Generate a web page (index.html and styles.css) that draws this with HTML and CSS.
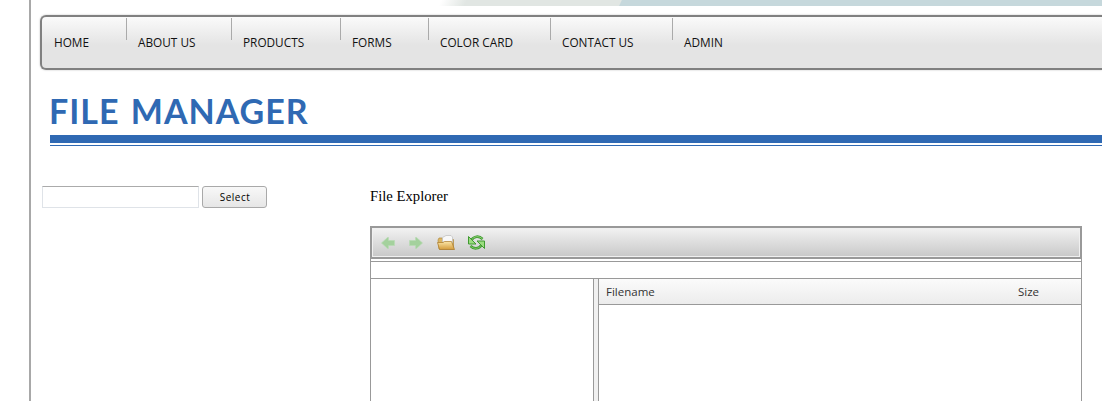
FILE: index.html
```html
<!DOCTYPE html>
<html lang="en">

<head>
  <meta charset="UTF-8" />
  <title>File Manager</title>
  <link rel="stylesheet" href="styles.css">
</head>

<body>
  <div class="page">
    <div class="banner"></div>

    <!-- Main menu -->
    <ul class="nav">
      <li class="home"><a>HOME</a></li>
      <li class="about"><a>ABOUT US</a></li>
      <li class="products"><a>PRODUCTS</a></li>
      <li class="forms"><a>FORMS</a></li>
      <li class="color"><a>COLOR CARD</a></li>
      <li class="contact"><a>CONTACT US</a></li>
      <li class="admin"><a>ADMIN</a></li>
    </ul>

    <div class="title">
      <h1>FILE MANAGER</h1>
    </div>

    <div class="content">
      <div class="picker">
        <input type="text" class="picker-input" />
        <button class="picker-btn">Select</button>
      </div>

      <div class="explorer">
        <p class="explorer-label">File Explorer</p>

        <div class="window">
          <div class="toolbar">
            <svg class="tool tool-back" width="14" height="12" viewBox="0 0 14 12">
              <path d="M0.5 6 L6.5 0.5 H7.5 V3.5 H13.5 V8.5 H7.5 V11.5 H6.5 Z" fill="#a4d19d" stroke="#b9dbb4" stroke-width="0.7" />
            </svg>
            <svg class="tool tool-forward" width="14" height="12" viewBox="0 0 14 12">
              <path d="M13.5 6 L7.5 0.5 H6.5 V3.5 H0.5 V8.5 H6.5 V11.5 H7.5 Z" fill="#a4d19d" stroke="#b9dbb4" stroke-width="0.7" />
            </svg>
            <svg class="tool tool-open" width="18" height="15" viewBox="0 0 18 15">
              <defs>
                <linearGradient id="folder" x1="0" y1="0" x2="0" y2="1">
                  <stop offset="0" stop-color="#fbe6a8" />
                  <stop offset="1" stop-color="#d49c3c" />
                </linearGradient>
              </defs>
              <path d="M1 5 L2 3 H5 L6 4.5 H16.5 V14 H2 Z" fill="#dcb663" stroke="#b28a3c" stroke-width="0.7" />
              <path d="M5.5 7 V2.5 L9 0.5 H14 L15.5 2 V8 Z" fill="#f8f8f8" stroke="#bdbdbd" stroke-width="0.7" />
              <path d="M0.5 7.5 H6 L7.5 6.5 H14.5 L17.5 14.5 H2.5 Z" fill="url(#folder)" stroke="#a9782a" stroke-width="0.7" />
            </svg>
            <svg class="tool tool-refresh" width="17" height="17" viewBox="0 0 17 17">
              <path d="M3.5 6 C6 2 11 1.5 14.5 5" fill="none" stroke="#3f9a30" stroke-width="2.6" />
              <path d="M3.5 6 C6 2 11 1.5 14.5 5" fill="none" stroke="#8fd276" stroke-width="1" />
              <path d="M0.5 2.5 V10 H8 Z" fill="#9bdc80" stroke="#3f9a30" stroke-width="1" />
              <path d="M13.5 11 C11 15 6 15.5 2.5 12" fill="none" stroke="#3f9a30" stroke-width="2.6" />
              <path d="M13.5 11 C11 15 6 15.5 2.5 12" fill="none" stroke="#7cc862" stroke-width="1" />
              <path d="M16.5 14.5 V7 H9 Z" fill="#9bdc80" stroke="#3f9a30" stroke-width="1" />
            </svg>
          </div>

          <div class="pathbar"></div>

          <div class="panes">
            <div class="tree"></div>
            <div class="splitter"></div>
            <div class="files">
              <div class="files-head">
                <span class="col-name">Filename</span>
                <span class="col-size">Size</span>
              </div>
            </div>
          </div>
        </div>
      </div>
    </div>
  </div>
</body>

</html>
```

FILE: styles.css
```css
html,
body {
  margin: 0;
  padding: 0;
  height: 401px;
  overflow: hidden;
  background: #fff;
}

body {
  font-family: "Open Sans", sans-serif;
  color: #222;
}

.page {
  height: 401px;
  margin-left: 29px;
  border-left: 2px solid #a8a8a8;
  box-sizing: border-box;
  overflow: hidden;
}

.banner {
  height: 6px;
  margin-bottom: 9px;
  background: linear-gradient(115deg, #fff 372px, #e1e6e3 395px, #e1e6e3 535px, #c6d8dc 536px);
}

/* menu */
.nav {
  list-style: none;
  display: flex;
  box-sizing: border-box;
  height: 55px;
  margin: 0 0 0 9px;
  padding: 1px 0 0;
  border: 2px solid #808080;
  border-right: 0;
  border-radius: 6px 0 0 6px;
  background: linear-gradient(#fafafa, #e4e4e4 55%, #e4e4e4);
  box-shadow: 0 0 2px #bbb;
}

.nav li {
  box-sizing: border-box;
  padding: 16px 0 0 12px;
  background: linear-gradient(#aaa, #aaa) left top / 1px 22px no-repeat;
  font-size: 11.8px;
  line-height: 17px;
  color: #111;
  white-space: nowrap;
}

.nav li.home {
  background: none;
  width: 84px;
}

.nav li.about { width: 105px; }
.nav li.products { width: 109px; }
.nav li.forms { width: 88px; }
.nav li.color { width: 122px; }
.nav li.contact { width: 122px; }

/* heading */
.title {
  margin: 23px 0 0 19px;
  border-bottom: 1px solid #2f69b3;
}

.title h1 {
  margin: 0 0 2px;
  padding: 0 0 7px;
  height: 35px;
  font-family: Lato, sans-serif;
  font-size: 34px;
  font-weight: 700;
  line-height: 35px;
  letter-spacing: 1px;
  word-spacing: 2px;
  text-indent: -1px;
  color: #2f69b3;
  border-bottom: 8px solid #2f69b3;
}

/* page body */
.content {
  display: flex;
  margin: 40px 0 0 11px;
}

.picker {
  display: flex;
  align-items: flex-start;
  width: 328px;
  gap: 3px;
}

.picker-input {
  box-sizing: border-box;
  width: 157px;
  height: 22px;
  margin: 0;
  padding: 0;
  border: 1px solid #dfe3e8;
  border-top-color: #ababab;
  background: #fff;
}

.picker-btn {
  box-sizing: border-box;
  width: 65px;
  height: 22px;
  margin: 0;
  padding: 0 0 0 1px;
  border: 1px solid #a9a9a9;
  border-radius: 3px;
  background: linear-gradient(#f8f8f8, #e6e6e6);
  font-family: "Open Sans", sans-serif;
  font-size: 10px;
  letter-spacing: 0.5px;
  color: #000;
}

.explorer {
  width: 712px;
}

.explorer-label {
  margin: 0 0 19px;
  font-family: "Liberation Serif", serif;
  font-size: 14.7px;
  line-height: 21px;
  color: #000;
}

/* file explorer window */
.window {
  border: 1px solid #999;
  border-top: 0;
}

.toolbar {
  display: flex;
  align-items: center;
  box-sizing: border-box;
  height: 33px;
  margin: 0 -1px;
  padding: 0 0 0 9px;
  border: 2px solid #999;
  background: linear-gradient(#f2f2f2, #c8c8c8);
  box-shadow: inset 0 0 0 1px #f0f0f0;
}

.tool {
  flex: none;
}

.tool-forward { margin-left: 14px; }
.tool-open { margin-left: 14px; }
.tool-refresh { margin-left: 13px; }

.pathbar {
  height: 16px;
  margin-top: 2px;
  border-top: 1px solid #999;
  border-bottom: 1px solid #999;
}

.panes {
  display: flex;
  height: 130px;
}

.tree {
  width: 222px;
}

.splitter {
  box-sizing: border-box;
  width: 6px;
  border-left: 1px solid #999;
  border-right: 1px solid #999;
  background: #f0f0f0;
}

.files {
  flex: 1;
}

.files-head {
  display: flex;
  box-sizing: border-box;
  height: 26px;
  border-bottom: 1px solid #999;
  background: linear-gradient(#fbfbfb, #ececec);
  font-size: 11.5px;
  line-height: 25px;
  color: #333;
}

.col-name {
  width: 412px;
  padding-left: 7px;
}
```
